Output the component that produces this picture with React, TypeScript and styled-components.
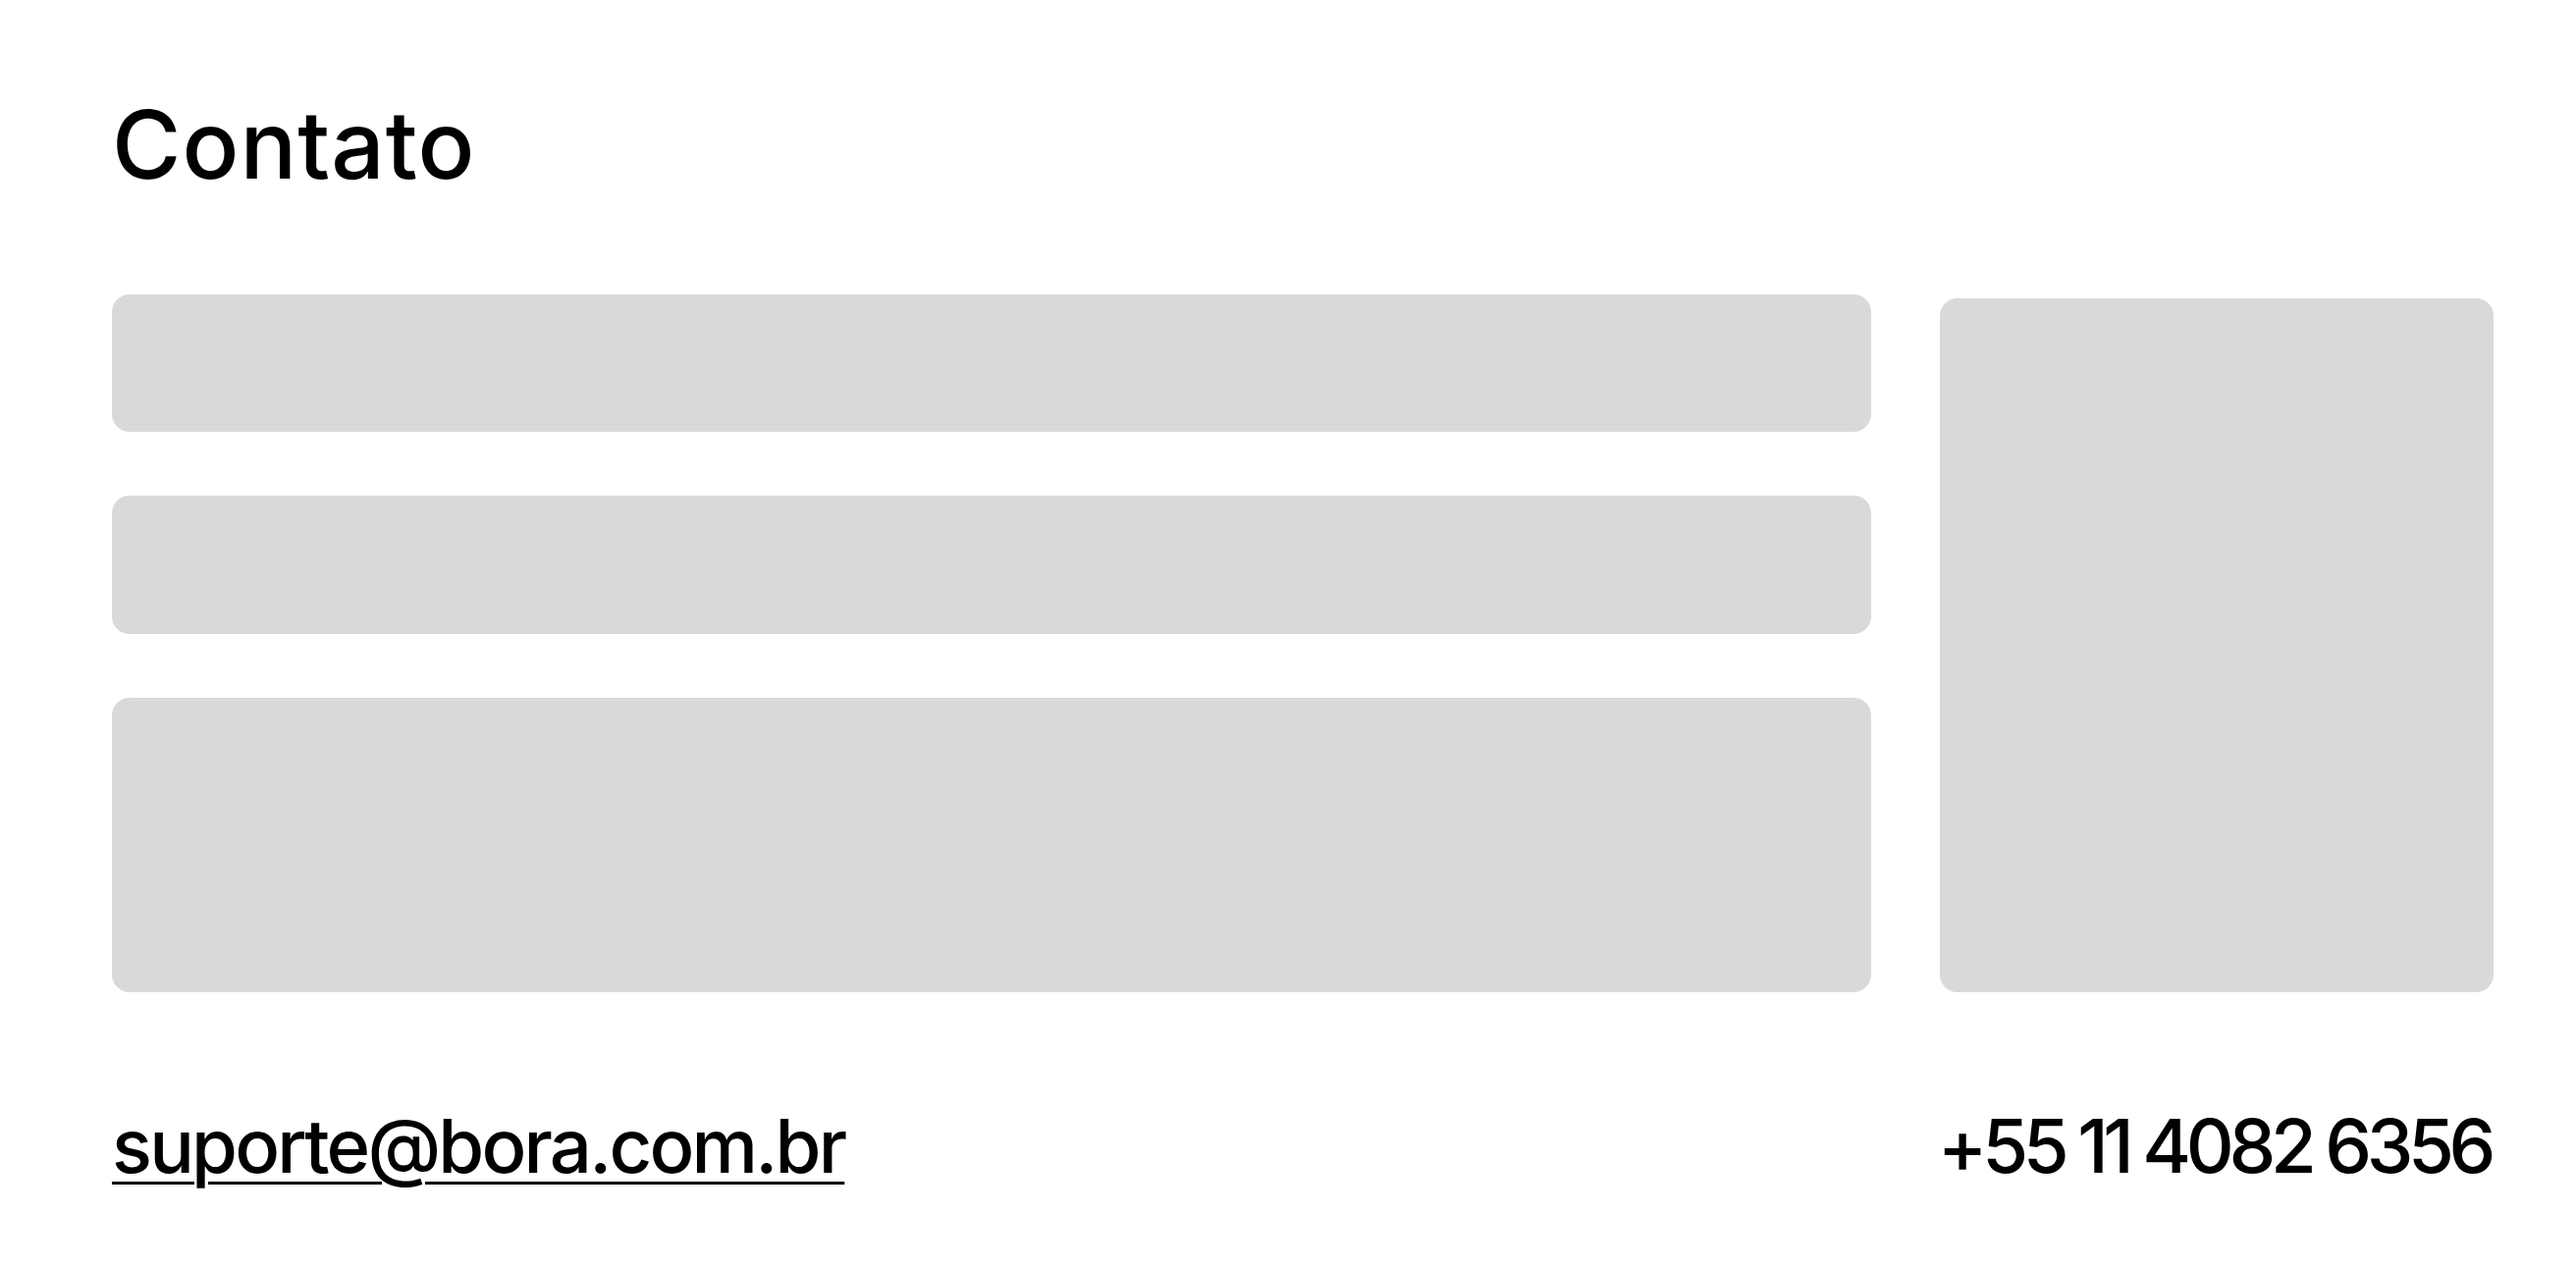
import React from "react";
import styled, { createGlobalStyle } from "styled-components";

const GlobalStyle = createGlobalStyle`
  html, body {
    margin: 0;
    padding: 0;
    background: #ffffff;
  }
  body {
    font-family: Inter, "Noto Sans", "Liberation Sans", sans-serif;
    color: #000000;
  }
`;

const Page = styled.main`
  box-sizing: border-box;
  width: 2624px;
  height: 1290px;
  padding: 99px 84px 0 114px;
  display: flex;
  flex-direction: column;
`;

const Title = styled.h1`
  margin: 0;
  font-size: 96px;
  line-height: 1;
  font-weight: 500;
  letter-spacing: 1px;
`;

const FormGrid = styled.section`
  margin-top: 105px;
  display: grid;
  grid-template-columns: 1792px 564px;
  column-gap: 70px;
  align-items: stretch;
`;

const FieldColumn = styled.div`
  display: flex;
  flex-direction: column;
  gap: 65px;
`;

const Field = styled.div<{ $height: number }>`
  height: ${(p) => p.$height}px;
  background: #d9d9d9;
  border-radius: 18px;
`;

const SidePanel = styled.div`
  margin-top: 4px;
  background: #d9d9d9;
  border-radius: 18px;
`;

const Footer = styled.footer`
  margin-top: 118px;
  display: flex;
  justify-content: space-between;
  align-items: flex-start;
`;

const ContactText = styled.a`
  font-size: 76px;
  line-height: 1;
  font-weight: 500;
  color: #000000;
`;

const Email = styled(ContactText)`
  letter-spacing: -2.8px;
  text-decoration: underline;
  text-decoration-thickness: 3px;
  text-underline-offset: 9px;
`;

const Phone = styled(ContactText)`
  text-decoration: none;
  letter-spacing: -5.4px;
  word-spacing: -1px;
  margin-right: 3px;
`;

export default function App() {
  return (
    <>
      <GlobalStyle />
      <Page>
        <Title>Contato</Title>
        <FormGrid>
          <FieldColumn>
            <Field $height={140} />
            <Field $height={141} />
            <Field $height={300} />
          </FieldColumn>
          <SidePanel />
        </FormGrid>
        <Footer>
          <Email href="mailto:suporte@bora.com.br">suporte@bora.com.br</Email>
          <Phone href="tel:+551140826356">+55 11 4082 6356</Phone>
        </Footer>
      </Page>
    </>
  );
}
